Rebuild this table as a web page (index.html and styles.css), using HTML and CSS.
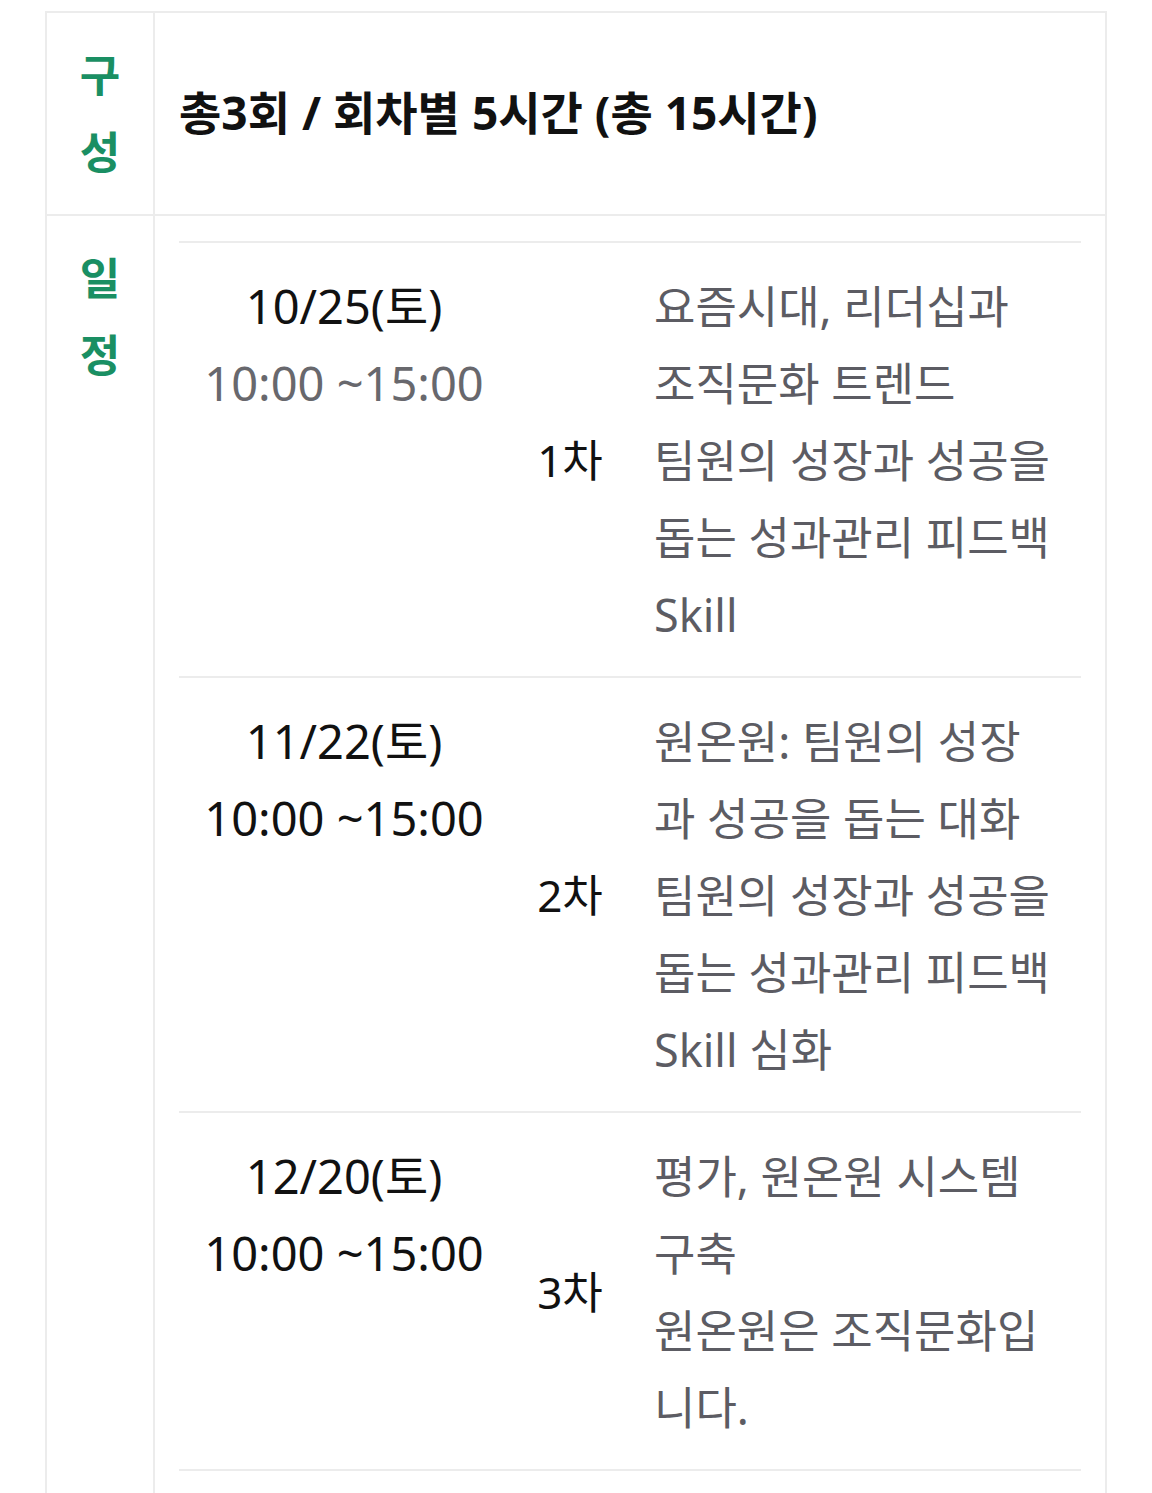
FILE: index.html
```html
<!DOCTYPE html>
<html lang="ko">
<head>
<meta charset="utf-8">
<link rel="stylesheet" href="styles.css">
</head>
<body>
<table class="outer">
  <tr class="row-head">
    <th class="label">구<br>성</th>
    <td class="summary">총3회 / 회차별 5시간 (총 15시간)</td>
  </tr>
  <tr class="row-sched">
    <th class="label top">일<br>정</th>
    <td class="sched-cell">
      <table class="inner">
        <tr>
          <td class="date"><div class="day">10/25(토)</div><div class="time muted">10:00 ~15:00</div></td>
          <td class="round">1차</td>
          <td class="topic">요즘시대, 리더십과<br>조직문화 트렌드<br>팀원의 성장과 성공을<br>돕는 성과관리 피드백<br>Skill</td>
        </tr>
        <tr>
          <td class="date"><div class="day">11/22(토)</div><div class="time">10:00 ~15:00</div></td>
          <td class="round">2차</td>
          <td class="topic">원온원: 팀원의 성장<br>과 성공을 돕는 대화<br>팀원의 성장과 성공을<br>돕는 성과관리 피드백<br>Skill 심화</td>
        </tr>
        <tr>
          <td class="date"><div class="day">12/20(토)</div><div class="time">10:00 ~15:00</div></td>
          <td class="round">3차</td>
          <td class="topic">평가, 원온원 시스템<br>구축<br>원온원은 조직문화입<br>니다.</td>
        </tr>
      </table>
    </td>
  </tr>
</table>
</body>
</html>
```
FILE: styles.css
```css
html, body {
  margin: 0;
  padding: 0;
  background: #ffffff;
}
body {
  padding: 11px 0 0 45px;
  font-family: "Noto Sans", "Noto Sans CJK KR", sans-serif;
  color: #111111;
}
.outer {
  width: 1062px;
  border-collapse: collapse;
  border: 2px solid #ececec;
}
.outer th,
.outer > tbody > tr > td {
  border: 2px solid #ececec;
}
.label {
  width: 106px;
  padding: 0;
  color: #1a8f63;
  font-size: 44px;
  font-weight: 700;
  line-height: 77px;
  text-align: center;
  vertical-align: middle;
}
.label.top {
  vertical-align: top;
  padding-top: 24px;
}
.row-head .label {
  height: 201px;
}
.summary {
  padding: 0 0 8px 24px;
  font-size: 46px;
  font-weight: 700;
  letter-spacing: 0;
  vertical-align: middle;
}
.sched-cell {
  padding: 25px 24px 22px 24px;
  vertical-align: top;
}
.inner {
  width: 100%;
  border-collapse: collapse;
}
.inner td {
  border-top: 2px solid #ececec;
  border-bottom: 2px solid #ececec;
  padding: 25px 0 23px 0;
  font-size: 44px;
  line-height: 77px;
}
.inner td.date {
  width: 330px;
  text-align: center;
  vertical-align: top;
  font-size: 47px;
}
.day {
  color: #111111;
}
.time {
  color: #111111;
}
.time.muted {
  color: #68686d;
}
.round {
  width: 122px;
  text-align: center;
  vertical-align: middle;
  color: #111111;
}
.inner td.topic {
  padding-left: 23px;
  vertical-align: top;
  white-space: nowrap;
  color: #5c5c63;
  font-size: 45px;
  letter-spacing: 0;
}
```
